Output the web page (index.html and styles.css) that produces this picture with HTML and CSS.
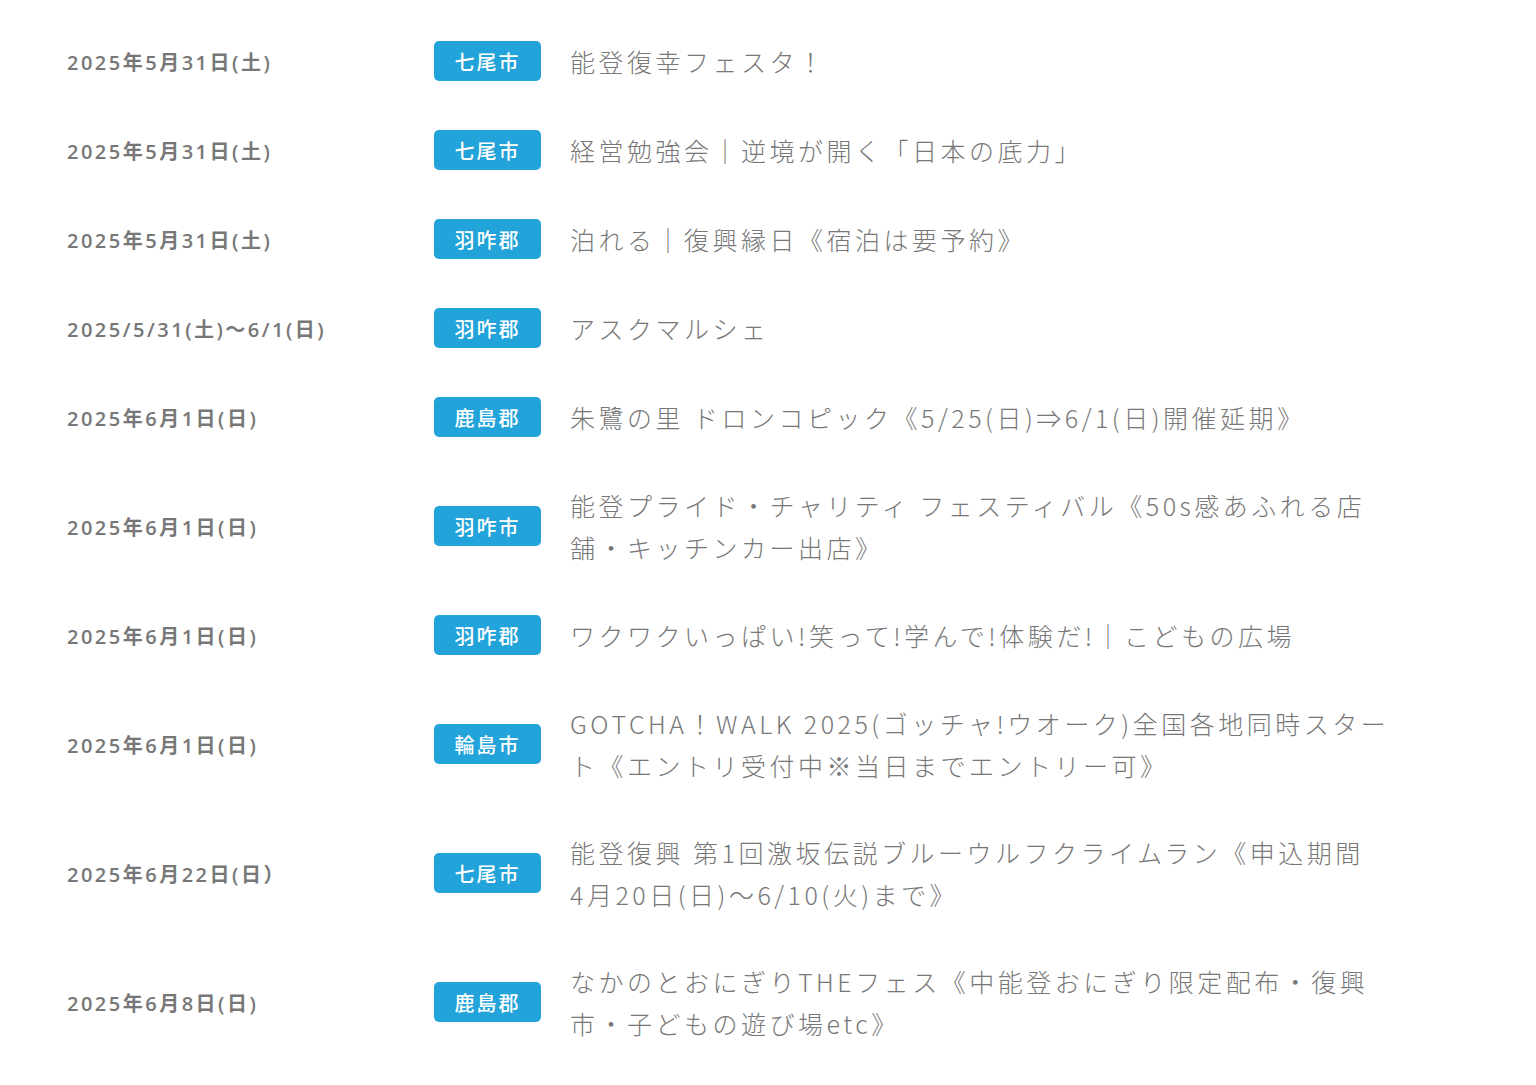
FILE: index.html
```html
<!DOCTYPE html>
<html lang="ja">
<head>
<meta charset="utf-8">
<link rel="stylesheet" href="styles.css">
</head>
<body>
<ul class="events">
  <li class="event"><span class="date">2025年5月31日(土)</span><span class="tag">七尾市</span><span class="title">能登復幸フェスタ！</span></li>
  <li class="event"><span class="date">2025年5月31日(土)</span><span class="tag">七尾市</span><span class="title">経営勉強会｜逆境が開く「日本の底力」</span></li>
  <li class="event"><span class="date">2025年5月31日(土)</span><span class="tag">羽咋郡</span><span class="title">泊れる｜復興縁日《宿泊は要予約》</span></li>
  <li class="event"><span class="date">2025/5/31(土)〜6/1(日)</span><span class="tag">羽咋郡</span><span class="title">アスクマルシェ</span></li>
  <li class="event"><span class="date">2025年6月1日(日)</span><span class="tag">鹿島郡</span><span class="title">朱鷺の里 ドロンコピック《5/25(日)⇒6/1(日)開催延期》</span></li>
  <li class="event"><span class="date">2025年6月1日(日)</span><span class="tag">羽咋市</span><span class="title">能登プライド・チャリティ フェスティバル《50s感あふれる店舗・キッチンカー出店》</span></li>
  <li class="event"><span class="date">2025年6月1日(日)</span><span class="tag">羽咋郡</span><span class="title">ワクワクいっぱい!笑って!学んで!体験だ!｜こどもの広場</span></li>
  <li class="event"><span class="date">2025年6月1日(日)</span><span class="tag">輪島市</span><span class="title">GOTCHA！WALK 2025(ゴッチャ!ウオーク)全国各地同時スタート《エントリ受付中※当日までエントリー可》</span></li>
  <li class="event"><span class="date">2025年6月22日(日）</span><span class="tag">七尾市</span><span class="title">能登復興 第1回激坂伝説ブルーウルフクライムラン《申込期間<span class="nowrap">4月</span>20日(日)〜6/10(火)まで》</span></li>
  <li class="event"><span class="date">2025年6月8日(日)</span><span class="tag">鹿島郡</span><span class="title">なかのとおにぎりTHEフェス《中能登おにぎり限定配布・復興市・子どもの遊び場etc》</span></li>
</ul>
</body>
</html>
```

FILE: styles.css
```css
html, body {
  margin: 0;
  padding: 0;
  background: #fff;
}
.events {
  list-style: none;
  margin: 0;
  padding: 16.5px 0 0 67px;
}
.event {
  display: grid;
  grid-template-columns: 367px 107px 1fr;
  align-items: center;
  padding: 22.5px 0;
}
.date {
  font-family: "Open Sans", "Noto Sans CJK JP", sans-serif;
  font-weight: 600;
  font-size: 20px;
  color: #777;
  letter-spacing: 2.5px;
}
.tag {
  display: flex;
  align-items: center;
  justify-content: center;
  height: 40px;
  margin: 2px 0;
  background: #22a3d9;
  color: #fff;
  border-radius: 5px;
  font-family: "Noto Sans CJK JP", sans-serif;
  font-weight: 500;
  font-size: 20px;
  letter-spacing: 2px;
}
.title {
  margin-left: 29px;
  max-width: 835px;
  font-family: "Noto Sans CJK JP", sans-serif;
  font-weight: 300;
  font-size: 25px;
  line-height: 42px;
  color: #777;
  letter-spacing: 3.5px;
}
.nowrap {
  white-space: nowrap;
}
```
